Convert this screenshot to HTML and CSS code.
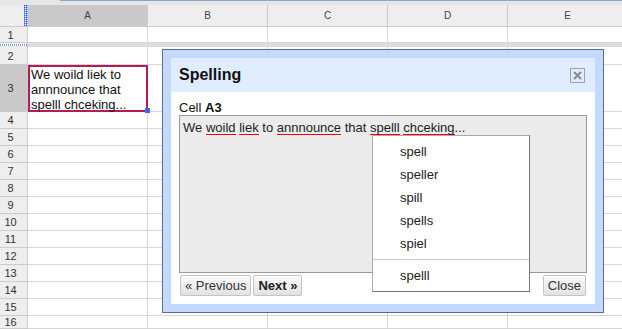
FILE: index.html
```html
<!DOCTYPE html>
<html lang="en">
    <head>
        <meta charset="UTF-8">
        <meta name="viewport" content="width=device-width,initial-scale=1.0">
        <title>Spelling</title>
        <link rel="stylesheet" href="styles.css">
    </head>
    <body>
        <div class="topedge"><span></span></div>
        <div class="sheet">
            <div class="corner"><span></span></div>
            <div class="colhead sel">A</div>
            <div class="colhead">B</div>
            <div class="colhead">C</div>
            <div class="colhead">D</div>
            <div class="colhead">E</div>

            <div class="rowhead">1</div>
            <div class="cell"></div><div class="cell"></div><div class="cell"></div><div class="cell"></div><div class="cell"></div>

            <div class="freeze-head"><span></span></div>
            <div class="freeze"></div>

            <div class="rowhead">2</div>
            <div class="cell"></div><div class="cell"></div><div class="cell"></div><div class="cell"></div><div class="cell"></div>

            <div class="rowhead sel">3</div>
            <div class="cell active">We woild liek to annnounce that spelll chceking...<span class="handle"></span></div>
            <div class="cell"></div><div class="cell"></div><div class="cell"></div><div class="cell"></div>

            <div class="rowhead">4</div>
            <div class="cell"></div><div class="cell"></div><div class="cell"></div><div class="cell"></div><div class="cell"></div>
            <div class="rowhead">5</div>
            <div class="cell"></div><div class="cell"></div><div class="cell"></div><div class="cell"></div><div class="cell"></div>
            <div class="rowhead">6</div>
            <div class="cell"></div><div class="cell"></div><div class="cell"></div><div class="cell"></div><div class="cell"></div>
            <div class="rowhead">7</div>
            <div class="cell"></div><div class="cell"></div><div class="cell"></div><div class="cell"></div><div class="cell"></div>
            <div class="rowhead">8</div>
            <div class="cell"></div><div class="cell"></div><div class="cell"></div><div class="cell"></div><div class="cell"></div>
            <div class="rowhead">9</div>
            <div class="cell"></div><div class="cell"></div><div class="cell"></div><div class="cell"></div><div class="cell"></div>
            <div class="rowhead">10</div>
            <div class="cell"></div><div class="cell"></div><div class="cell"></div><div class="cell"></div><div class="cell"></div>
            <div class="rowhead">11</div>
            <div class="cell"></div><div class="cell"></div><div class="cell"></div><div class="cell"></div><div class="cell"></div>
            <div class="rowhead">12</div>
            <div class="cell"></div><div class="cell"></div><div class="cell"></div><div class="cell"></div><div class="cell"></div>
            <div class="rowhead">13</div>
            <div class="cell"></div><div class="cell"></div><div class="cell"></div><div class="cell"></div><div class="cell"></div>
            <div class="rowhead">14</div>
            <div class="cell"></div><div class="cell"></div><div class="cell"></div><div class="cell"></div><div class="cell"></div>
            <div class="rowhead">15</div>
            <div class="cell"></div><div class="cell"></div><div class="cell"></div><div class="cell"></div><div class="cell"></div>
            <div class="rowhead">16</div>
            <div class="cell"></div><div class="cell"></div><div class="cell"></div><div class="cell"></div><div class="cell"></div>
        </div>

        <div class="dialog">
            <div class="dialog-inner">
                <div class="dialog-title">
                    <span>Spelling</span>
                    <svg class="close-x" width="15" height="15" viewBox="0 0 15 15">
                        <rect x="0.5" y="0.5" width="14" height="14" fill="none" stroke="#a0a0a0"/>
                        <path d="M4 4 L11 11 M11 4 L4 11" stroke="#8a8a8a" stroke-width="2"/>
                    </svg>
                </div>
                <div class="dialog-body">
                    <div class="cell-label">Cell <b>A3</b></div>
                    <div class="check-box">
                        We <span class="bad">woild</span> <span class="bad">liek</span> to <span class="bad">annnounce</span> that <span class="bad">spelll</span> <span class="bad">chceking</span>...
                        <ul class="suggest">
                            <li>spell</li>
                            <li>speller</li>
                            <li>spill</li>
                            <li>spells</li>
                            <li>spiel</li>
                            <li class="sep"></li>
                            <li>spelll</li>
                        </ul>
                    </div>
                    <div class="buttons">
                        <button>&laquo; Previous</button>
                        <button class="strong">Next &raquo;</button>
                        <button class="close">Close</button>
                    </div>
                </div>
            </div>
        </div>
    </body>
</html>
```

FILE: styles.css
```css
*{
    margin: 0;
    padding: 0;
    box-sizing: border-box;
}
body{
    width: 622px;
    height: 329px;
    overflow: hidden;
    background: #fff;
    font-family: "Liberation Sans", Arial, sans-serif;
    font-size: 13px;
    color: #222;
}
.topedge{
    height: 5px;
    background: #e6e6e6;
}
.topedge span{
    display: block;
    margin-left: 60px;
    height: 1px;
    background: #8aa6c6;
}
.sheet{
    display: grid;
    grid-template-columns: 28px repeat(5, 120px);
    grid-template-rows: 22px 16px 4px 18px 47px repeat(12, 17px);
}
.corner{
    display: flex;
    justify-content: flex-end;
    background: #eee;
    border-bottom: 1px solid #ccc;
}
.corner span{
    width: 4px;
    background: repeating-linear-gradient(90deg, #7d9cf0 0 1px, transparent 1px 2px),
                repeating-linear-gradient(180deg, #7d9cf0 0 1px, #fff 1px 2px);
    background-blend-mode: multiply;
}
.colhead{
    display: flex;
    align-items: center;
    justify-content: center;
    background: #eee;
    border-right: 1px solid #ccc;
    border-bottom: 1px solid #ccc;
    font-size: 10px;
    color: #444;
}
.colhead.sel{
    background: #c9c9c9;
}
.rowhead{
    display: flex;
    align-items: center;
    justify-content: center;
    padding-right: 6px;
    background: #eee;
    border-right: 1px solid #ccc;
    border-bottom: 1px solid #ccc;
    font-size: 11px;
    color: #333;
}
.rowhead.sel{
    background: #c9c9c9;
}
.cell{
    border-right: 1px solid #d6d6d6;
    border-bottom: 1px solid #d6d6d6;
}
.freeze-head{
    display: flex;
    align-items: center;
    background: #eee;
    border-right: 1px solid #ccc;
}
.freeze-head span{
    flex: 1;
    height: 2px;
    background: repeating-linear-gradient(90deg, #7d9cf0 0 1px, #fff 1px 2px);
}
.freeze{
    grid-column: span 5;
    background: #dcdcdc;
}
/* selected cell: red/blue marching border */
.cell.active{
    position: relative;
    border: 2px solid transparent;
    background:
        linear-gradient(#fff, #fff) padding-box,
        repeating-linear-gradient(90deg, #f00 0 2px, #2a4cf5 2px 3px) top / 100% 2px no-repeat border-box,
        repeating-linear-gradient(90deg, #f00 0 2px, #2a4cf5 2px 3px) bottom / 100% 2px no-repeat border-box,
        repeating-linear-gradient(180deg, #f00 0 2px, #2a4cf5 2px 3px) border-box;
    padding: 0 1px;
    line-height: 15px;
    font-size: 13px;
    color: #111;
}
.handle{
    position: absolute;
    right: -4px;
    bottom: -3px;
    width: 5px;
    height: 5px;
    background: #3a6ad0;
}
.dialog{
    position: absolute;
    left: 162px;
    top: 49px;
    width: 442px;
    border: 1px solid #566f91;
    background: #c3d9ff;
    padding: 8px;
}
.dialog-inner{
    background: #fff;
}
.dialog-title{
    display: flex;
    align-items: center;
    justify-content: space-between;
    height: 34px;
    padding: 0 10px 0 8px;
    background: #e0ecff;
    font-size: 16px;
    font-weight: bold;
    color: #111;
}
.close-x{
    display: block;
}
.dialog-body{
    padding: 8px 8px 8px;
}
.cell-label{
    line-height: 15px;
    color: #111;
}
.check-box{
    position: relative;
    height: 158px;
    padding: 4px 3px;
    border: 1px solid #999;
    background: #ebebeb;
    line-height: 15px;
    color: #222;
}
.bad{
    background: linear-gradient(#f00, #f00) left bottom / 100% 1px no-repeat;
}
.suggest{
    position: absolute;
    left: 192px;
    top: 19px;
    width: 158px;
    list-style: none;
    padding: 4px 0;
    background: #fff;
    border: 1px solid #aaa;
    border-right-color: #777;
    border-bottom-color: #777;
}
.suggest li{
    height: 23px;
    line-height: 23px;
    padding-left: 27px;
    color: #222;
}
.suggest li.sep{
    height: 1px;
    margin: 4px 0;
    background: #c8c8c8;
}
.buttons{
    display: flex;
    gap: 2px;
    margin-top: 2px;
    padding: 0 1px;
}
.buttons button{
    height: 21px;
    padding: 0 4px;
    border: 1px solid #c4c4c4;
    border-radius: 2px;
    background: linear-gradient(#fafafa, #e2e2e2);
    font-family: "Liberation Sans", Arial, sans-serif;
    font-size: 13px;
    color: #333;
}
.buttons .strong{
    font-weight: bold;
    color: #222;
}
.buttons .close{
    margin-left: auto;
}
```
